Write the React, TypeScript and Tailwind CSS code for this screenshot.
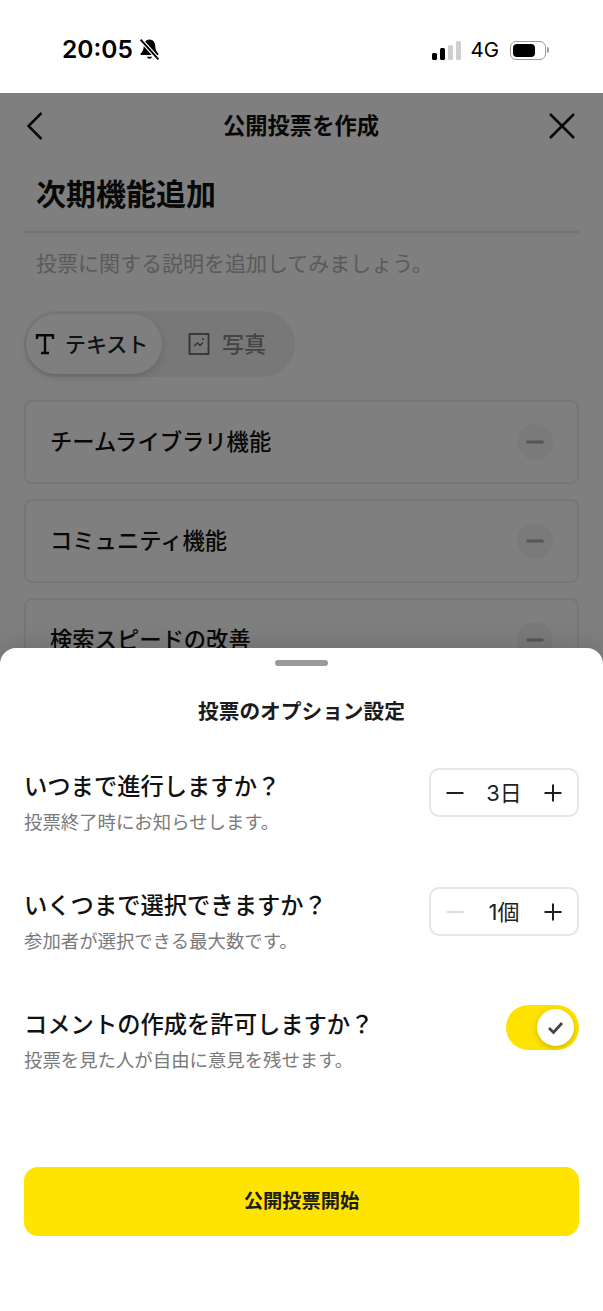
const cjk = "font-['Inter','Noto_Sans_CJK_JP',sans-serif]";

function Minus({ className, thick }: { className?: string; thick?: boolean }) {
  return (
    <svg width="18" height="18" viewBox="0 0 18 18" className={className}>
      <path d="M0.5 9H17.5" stroke="currentColor" strokeWidth={thick ? 3 : 2} />
    </svg>
  );
}

function Plus() {
  return (
    <svg width="18" height="18" viewBox="0 0 18 18" className="text-[#1e1e1e]">
      <path d="M0.5 9H17.5M9 0.5V17.5" stroke="currentColor" strokeWidth="2" />
    </svg>
  );
}

function Item({ label }: { label: string }) {
  return (
    <div className="flex h-[84px] shrink-0 items-center justify-between rounded-lg border-2 border-[#ededed] pl-[24px] pr-[24px]">
      <span className="text-[22.300px] font-medium leading-none text-[#111]">{label}</span>
      <span className="flex h-9 w-9 items-center justify-center rounded-full bg-[#f5f5f5]">
        <Minus thick className="text-[#aaaaaa]" />
      </span>
    </div>
  );
}

function Stepper({ value, disabled }: { value: string; disabled?: boolean }) {
  return (
    <div className="flex h-[49px] w-[150px] items-center justify-between rounded-[10px] border-2 border-[#e6e6e6] bg-white px-[15px]">
      <Minus className={disabled ? "text-[#dcdcdc]" : "text-[#1e1e1e]"} />
      <span className="text-[22px] leading-none text-[#222]">{value}</span>
      <Plus />
    </div>
  );
}

function OptionRow({ title, sub, children }: { title: string; sub: string; children: React.ReactNode }) {
  return (
    <div className="flex items-start justify-between">
      <div className="flex flex-col gap-[11px] pt-[5px]">
        <span className="text-[23.300px] font-medium leading-[28px] text-[#111]">{title}</span>
        <span className="text-[18.400px] leading-[20px] text-[#7a7a7a]">{sub}</span>
      </div>
      {children}
    </div>
  );
}

export default function App() {
  return (
    <div className={`relative h-[1311px] w-[603px] overflow-hidden bg-white ${cjk}`}>
      {/* Status bar */}
      <div className="flex h-[93px] items-start justify-between pl-[62px] pr-[54px] pt-[34px]">
        <div className="flex items-center gap-[6px]">
          <span className="text-[24.500px] font-semibold leading-[30px] text-black">20:05</span>
          <svg width="21" height="23" viewBox="0 0 20 22">
            <path d="M10 1.5c-3.6 0-5.500 3-5.500 6 0 3.500-1 5.500-3 7.500v1.200h17V15c-2-2-3-4-3-7.500 0-3-1.900-6-5.500-6z" fill="#000" />
            <path d="M7.500 18a2.600 2.600 0 0 0 5 0z" fill="#000" />
            <path d="M1.500 1.500 18.500 20.500" stroke="#fff" strokeWidth="4" />
            <path d="M1.500 1.500 18.500 20.500" stroke="#000" strokeWidth="1.800" />
          </svg>
        </div>
        <div className="flex items-center pt-[5px]">
          <div className="flex items-end gap-[3px]">
            <span className="h-[7px] w-[5px] rounded-[1.500px] bg-black" />
            <span className="h-[12px] w-[5px] rounded-[1.500px] bg-black" />
            <span className="h-[15px] w-[5px] rounded-[1.500px] bg-[#cfcfcf]" />
            <span className="h-[19px] w-[5px] rounded-[1.500px] bg-[#cfcfcf]" />
          </div>
          <span className="ml-[9px] text-[20.500px] leading-[22px] text-black">4G</span>
          <div className="ml-[11px] flex h-[19px] w-[36px] items-center rounded-[6px] border border-[#9a9a9a] p-[2px]">
            <span className="h-[13px] w-[22px] rounded-[4px] bg-black" />
          </div>
          <span className="ml-[1px] h-[6px] w-[2px] rounded-r-full bg-[#9a9a9a]" />
        </div>
      </div>

      {/* Page beneath the dim layer */}
      <div className="relative h-[1218px] overflow-hidden">
        <div className="flex h-[66px] items-center justify-between pl-[26px] pr-[27px]">
          <div className="w-[28px]">
            <svg width="18" height="30" viewBox="0 0 18 30">
              <path d="M15.500 2 2.500 15l13 13" fill="none" stroke="#111" strokeWidth="2.500" />
            </svg>
          </div>
          <span className="text-[22.300px] font-semibold leading-none text-[#111]">公開投票を作成</span>
          <svg width="28" height="28" viewBox="0 0 28 28">
            <path d="M2 2 26 26M26 2 2 26" fill="none" stroke="#111" strokeWidth="2.500" />
          </svg>
        </div>

        <div className="mx-6 flex h-[74px] items-center border-b-2 border-[#e6e6e6] pl-[12px]">
          <span className="pb-[3px] text-[30px] font-bold leading-none text-[#111]">次期機能追加</span>
        </div>

        <div className="flex h-[62px] items-center pb-[2px] pl-[36px]">
          <span className="text-[21px] leading-none text-[#b4b4b4]">投票に関する説明を追加してみましょう。</span>
        </div>

        <div className="ml-6 mt-[16px] flex h-[66px] w-[271px] items-center rounded-full bg-[#f0f0f0] p-[2px]">
          <div className="flex h-[60px] w-[136px] items-center rounded-full bg-white pl-[9px] shadow-[0_3px_8px_rgba(0,0,0,0.15)]">
            <svg width="20" height="22" viewBox="0 0 20 22">
              <path d="M2 6V2.200h16V6M10 2.200V20M6 20h8" fill="none" stroke="#111" strokeWidth="2.400" />
            </svg>
            <span className="ml-[10px] text-[21px] font-medium leading-none text-[#222]">テキスト</span>
          </div>
          <div className="flex items-center pl-[26px]">
            <svg width="22" height="24" viewBox="0 0 22 24">
              <rect x="1.500" y="2" width="19" height="20" fill="none" stroke="#666" strokeWidth="1.800" />
              <path d="M6 14l3.500-3 2.500 2.500 3-3" fill="none" stroke="#666" strokeWidth="1.400" />
              <circle cx="15" cy="7" r="1" fill="#666" />
            </svg>
            <span className="ml-[12px] text-[22px] font-medium leading-none text-[#888]">写真</span>
          </div>
        </div>

        <div className="mx-6 mt-[23px] flex flex-col gap-[15px]">
          <Item label="チームライブラリ機能" />
          <Item label="コミュニティ機能" />
          <Item label="検索スピードの改善" />
        </div>

        {/* Dim layer */}
        <div className="absolute inset-0 bg-black/50" />
      </div>

      {/* Bottom sheet */}
      <div className="absolute inset-x-0 bottom-0 flex h-[663px] flex-col rounded-t-[16px] bg-white px-6 shadow-[0_-4px_24px_rgba(0,0,0,0.12)]">
        <div className="mx-auto mt-3 h-[6px] w-[53px] rounded-full bg-[#9a9a9a]" />
        <div className="mt-[33px] text-center text-[20.700px] font-semibold leading-[26px] text-[#1c1c1c]">投票のオプション設定</div>
        <div className="mt-[43px] flex flex-col gap-[55px]">
          <OptionRow title="いつまで進行しますか？" sub="投票終了時にお知らせします。">
            <Stepper value="3日" />
          </OptionRow>
          <OptionRow title="いくつまで選択できますか？" sub="参加者が選択できる最大数です。">
            <Stepper value="1個" disabled />
          </OptionRow>
          <OptionRow title="コメントの作成を許可しますか？" sub="投票を見た人が自由に意見を残せます。">
            <div className="-mt-px flex h-[45px] w-[73px] items-center justify-end rounded-full bg-[#ffe200] pr-[5px]">
              <span className="flex h-[37px] w-[37px] items-center justify-center rounded-full bg-white shadow-[0_2px_6px_rgba(0,0,0,0.2)]">
                <svg width="17" height="14" viewBox="0 0 17 14">
                  <path d="M2 7l4.500 4.500L15 2" fill="none" stroke="#444" strokeWidth="2.800" />
                </svg>
              </span>
            </div>
          </OptionRow>
        </div>
        <button className="mt-[97px] flex h-[69px] items-center justify-center rounded-[14px] bg-[#ffe400] text-[19.300px] font-semibold text-[#1c1c1c]">
          公開投票開始
        </button>
      </div>
    </div>
  );
}
